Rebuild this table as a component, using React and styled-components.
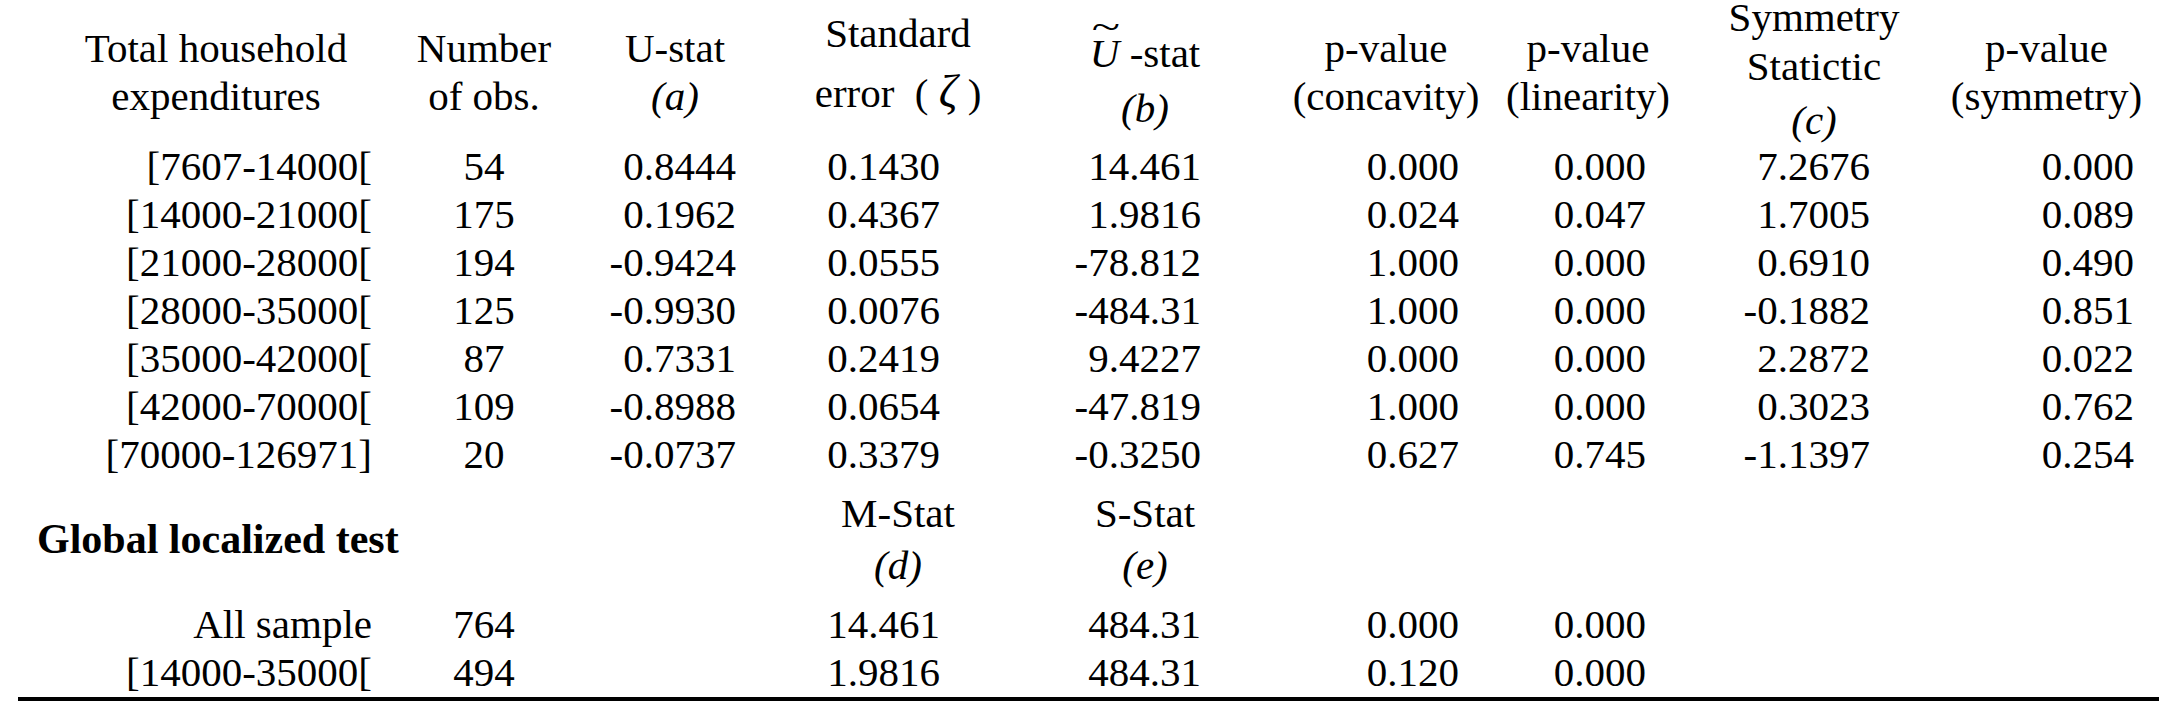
import React from "react";
import styled, { createGlobalStyle } from "styled-components";

// column tracks: width, right padding for the figures, how the figures sit
const COLS = [
  { w: 396, pr: 42, align: "right" },
  { w: 140, pr: 0, align: "center" },
  { w: 242, pr: 60, align: "right" },
  { w: 204, pr: 60, align: "right" },
  { w: 290, pr: 89, align: "right" },
  { w: 192, pr: 23, align: "right" },
  { w: 212, pr: 48, align: "right" },
  { w: 240, pr: 64, align: "right" },
  { w: 225, pr: 25, align: "right" },
];
const TEMPLATE = COLS.map((c) => c.w + "px").join(" ");

const rows = [
  ["[7607-14000[", "54", "0.8444", "0.1430", "14.461", "0.000", "0.000", "7.2676", "0.000"],
  ["[14000-21000[", "175", "0.1962", "0.4367", "1.9816", "0.024", "0.047", "1.7005", "0.089"],
  ["[21000-28000[", "194", "-0.9424", "0.0555", "-78.812", "1.000", "0.000", "0.6910", "0.490"],
  ["[28000-35000[", "125", "-0.9930", "0.0076", "-484.31", "1.000", "0.000", "-0.1882", "0.851"],
  ["[35000-42000[", "87", "0.7331", "0.2419", "9.4227", "0.000", "0.000", "2.2872", "0.022"],
  ["[42000-70000[", "109", "-0.8988", "0.0654", "-47.819", "1.000", "0.000", "0.3023", "0.762"],
  ["[70000-126971]", "20", "-0.0737", "0.3379", "-0.3250", "0.627", "0.745", "-1.1397", "0.254"],
];

const globalRows = [
  ["All sample", "764", "", "14.461", "484.31", "0.000", "0.000", "", ""],
  ["[14000-35000[", "494", "", "1.9816", "484.31", "0.120", "0.000", "", ""],
];

const GlobalStyle = createGlobalStyle`
  html, body {
    margin: 0;
    padding: 0;
    background: #ffffff;
    overflow: hidden;
  }
  body {
    font-family: "Liberation Serif", "Times New Roman", serif;
    font-size: 41px;
    color: #000000;
  }
`;

const Table = styled.div`
  margin-left: 18px;
  width: 2141px;
  padding-bottom: 1px;
  border-bottom: 4px solid #000;
`;

const HeaderRow = styled.div`
  display: grid;
  grid-template-columns: ${TEMPLATE};
  height: 142px;
`;

const HeadCell = styled.div`
  display: flex;
  flex-direction: column;
  align-items: center;
  padding-top: ${(p) => p.$pt}px;
  gap: ${(p) => p.$gap}px;
  white-space: nowrap;
`;

const HeadLine = styled.div`
  line-height: 30px;
  margin-top: ${(p) => p.$mt || 0}px;
`;

const Note = styled.i`
  font-style: italic;
`;

const Zeta = styled.i`
  font-style: italic;
  font-size: 46px;
`;

const Accent = styled.span`
  position: relative;
  display: inline-block;
  font-style: italic;

  &::before {
    content: "~";
    position: absolute;
    left: 55%;
    top: -29px;
    transform: translateX(-50%) scaleX(1.45);
    font-style: normal;
    font-size: 36px;
    line-height: 1;
  }
`;

const Row = styled.div`
  display: grid;
  grid-template-columns: ${TEMPLATE};
  height: 48px;
  line-height: 48px;
`;

const Cell = styled.div`
  text-align: ${(p) => p.$align};
  padding-right: ${(p) => p.$pr}px;
  white-space: nowrap;
`;

const GlobalRow = styled.div`
  display: grid;
  grid-template-columns: ${TEMPLATE};
  box-sizing: border-box;
  height: 102px;
  padding-top: 20px;
`;

const GlobalLabel = styled.div`
  align-self: center;
  padding-left: 19px;
  font-size: 42px;
  font-weight: bold;
  white-space: nowrap;
`;

const GlobalBody = styled.div`
  padding-top: 20px;
`;

function DataRow({ values }) {
  return (
    <Row>
      {values.map((v, i) => (
        <Cell key={i} $align={COLS[i].align} $pr={COLS[i].pr}>
          {v}
        </Cell>
      ))}
    </Row>
  );
}

export default function App() {
  return (
    <>
      <GlobalStyle />
      <Table>
        <HeaderRow>
          <HeadCell $pt={33} $gap={18}>
            <HeadLine>Total household</HeadLine>
            <HeadLine>expenditures</HeadLine>
          </HeadCell>
          <HeadCell $pt={33} $gap={18}>
            <HeadLine>Number</HeadLine>
            <HeadLine>of obs.</HeadLine>
          </HeadCell>
          <HeadCell $pt={33} $gap={18}>
            <HeadLine>U-stat</HeadLine>
            <HeadLine>
              <Note>(a)</Note>
            </HeadLine>
          </HeadCell>
          <HeadCell $pt={18} $gap={29}>
            <HeadLine>Standard</HeadLine>
            <HeadLine>
              error&nbsp; ( <Zeta>ζ</Zeta> )
            </HeadLine>
          </HeadCell>
          <HeadCell $pt={38} $gap={25}>
            <HeadLine>
              <Accent>U</Accent> -stat
            </HeadLine>
            <HeadLine>
              <Note>(b)</Note>
            </HeadLine>
          </HeadCell>
          <HeadCell $pt={33} $gap={18}>
            <HeadLine>p-value</HeadLine>
            <HeadLine>(concavity)</HeadLine>
          </HeadCell>
          <HeadCell $pt={33} $gap={18}>
            <HeadLine>p-value</HeadLine>
            <HeadLine>(linearity)</HeadLine>
          </HeadCell>
          <HeadCell $pt={2} $gap={19}>
            <HeadLine>Symmetry</HeadLine>
            <HeadLine>Statictic</HeadLine>
            <HeadLine $mt={5}>
              <Note>(c)</Note>
            </HeadLine>
          </HeadCell>
          <HeadCell $pt={33} $gap={18}>
            <HeadLine>p-value</HeadLine>
            <HeadLine>(symmetry)</HeadLine>
          </HeadCell>
        </HeaderRow>

        {rows.map((r) => (
          <DataRow key={r[0]} values={r} />
        ))}

        <GlobalRow>
          <GlobalLabel>Global localized test</GlobalLabel>
          <div />
          <div />
          <HeadCell $pt={0} $gap={22}>
            <HeadLine>M-Stat</HeadLine>
            <HeadLine>
              <Note>(d)</Note>
            </HeadLine>
          </HeadCell>
          <HeadCell $pt={0} $gap={22}>
            <HeadLine>S-Stat</HeadLine>
            <HeadLine>
              <Note>(e)</Note>
            </HeadLine>
          </HeadCell>
        </GlobalRow>

        <GlobalBody>
          {globalRows.map((r) => (
            <DataRow key={r[0]} values={r} />
          ))}
        </GlobalBody>
      </Table>
    </>
  );
}
